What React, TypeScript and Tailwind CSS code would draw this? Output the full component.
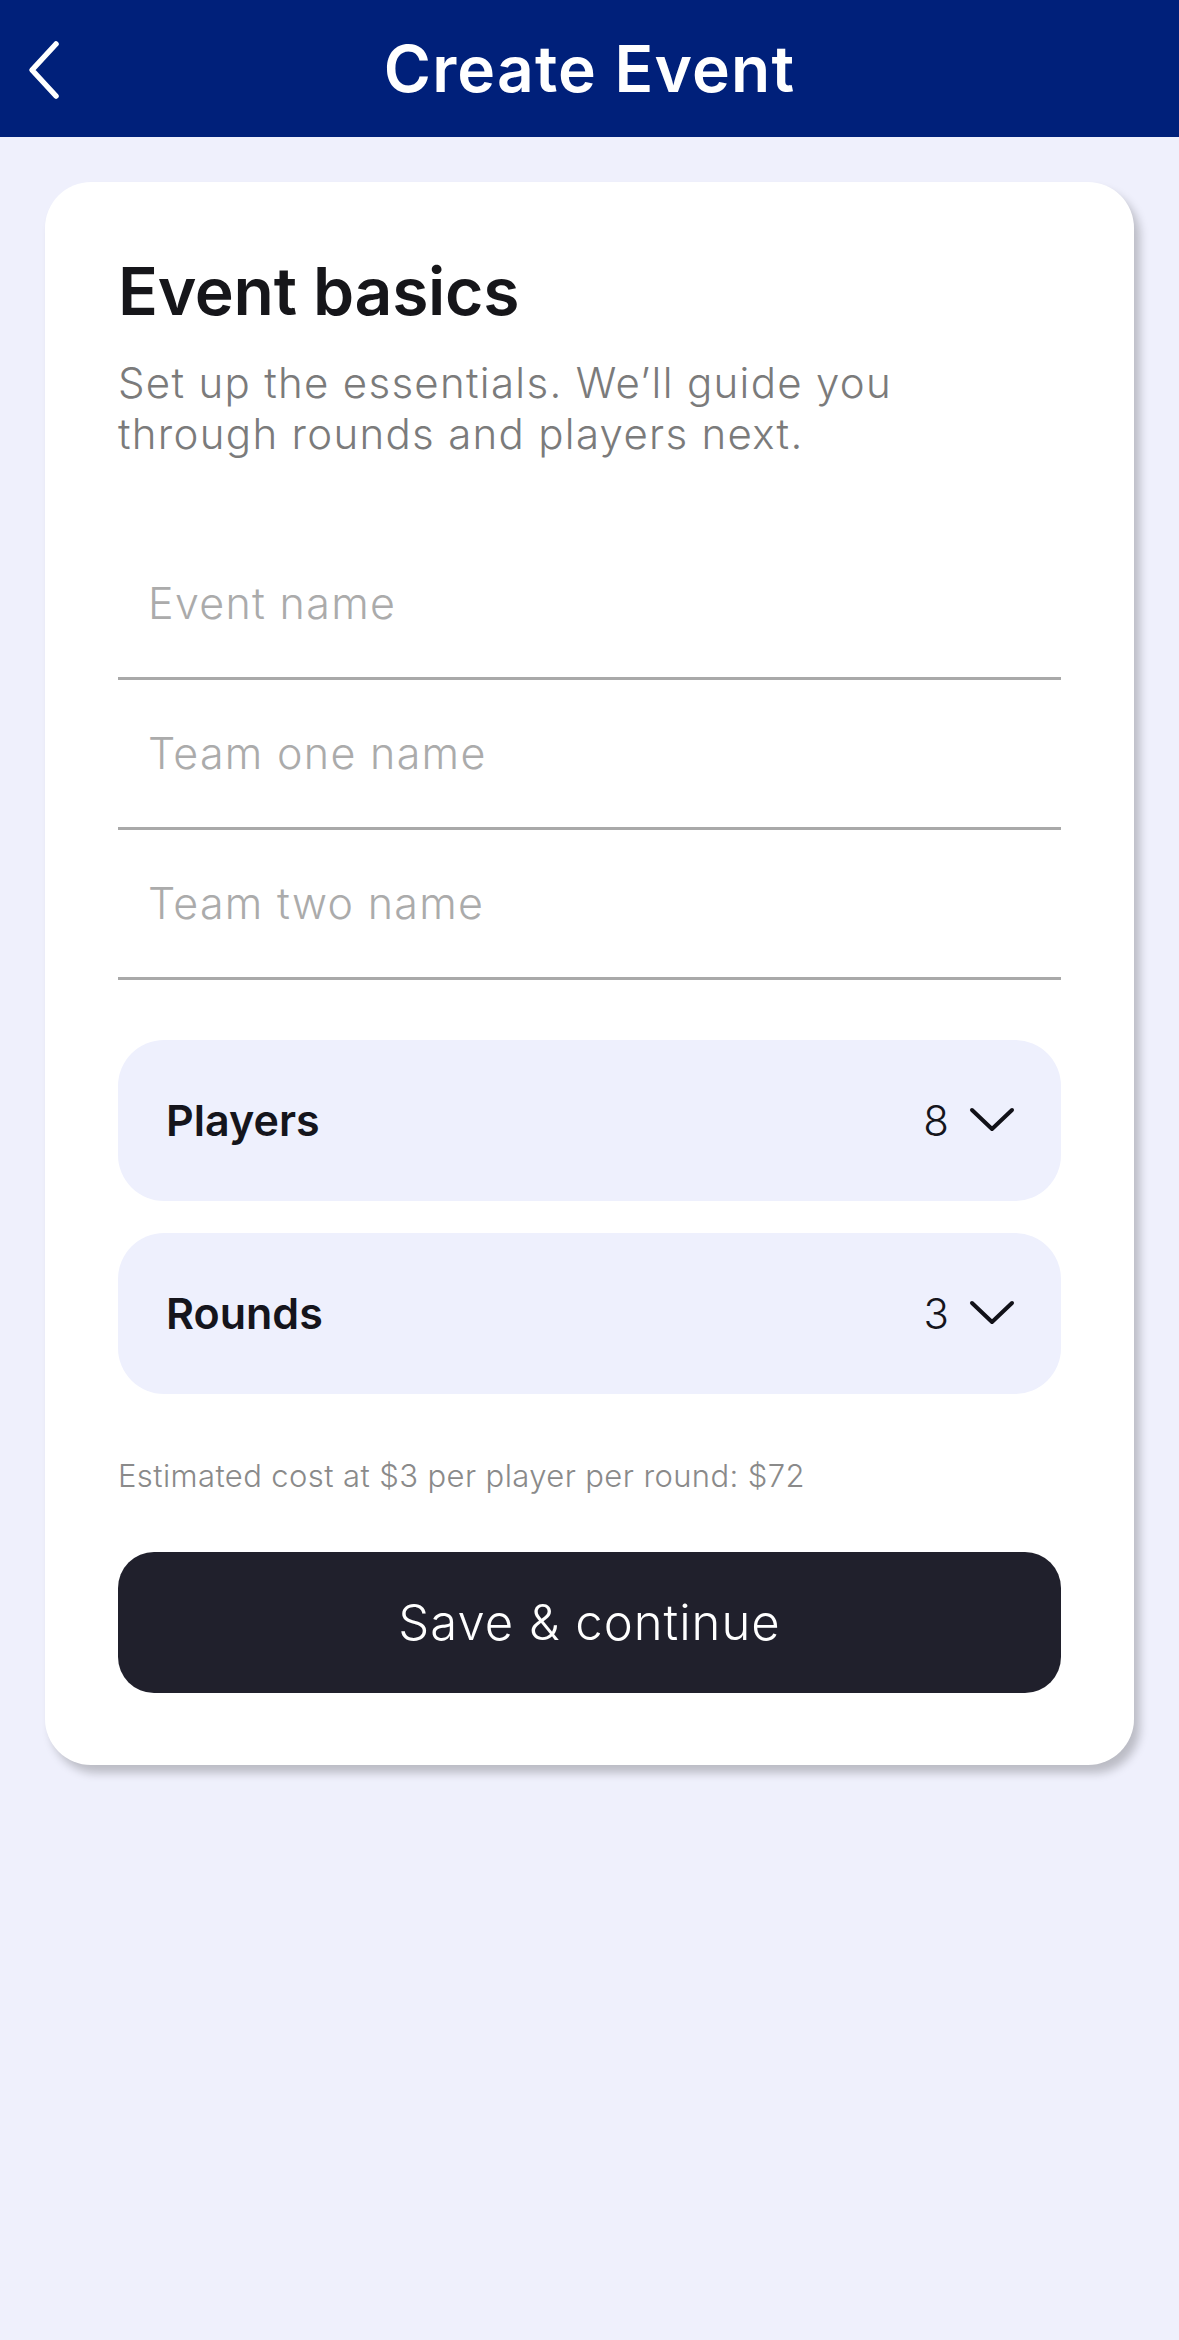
import { useState } from 'react';

const font = { fontFamily: 'Inter, "Open Sans", sans-serif' };

function ChevronDown() {
  return (
    <svg width="46" height="26" viewBox="0 0 46 26" fill="none" className="shrink-0">
      <path d="M3 3 L23 22 L43 3" stroke="#111118" strokeWidth="4" strokeLinecap="round" strokeLinejoin="round" />
    </svg>
  );
}

function Field({ placeholder }: { placeholder: string }) {
  const [value, setValue] = useState('');
  return (
    <div className="h-[150px] border-b-[3px] border-[#a9a9a9] flex items-center">
      <input
        value={value}
        onChange={(e) => setValue(e.target.value)}
        placeholder={placeholder}
        className="w-full bg-transparent outline-none pl-[30px] text-[43px] tracking-[1.3px] text-[#222] placeholder:text-[#ababab] font-light"
        style={font}
      />
    </div>
  );
}

function Picker({ label, value }: { label: string; value: string }) {
  return (
    <div className="h-[161px] rounded-[46px] bg-[#eef0fd] flex items-center justify-between pl-[48px] pr-[46px]">
      <span className="text-[43px] font-semibold text-[#15151c]">{label}</span>
      <div className="flex items-center gap-[20px]">
        <span className="text-[42px] font-light text-[#15151c]">{value}</span>
        <ChevronDown />
      </div>
    </div>
  );
}

export default function App() {
  return (
    <div className="min-h-[2340px] bg-[#eff0fc]" style={font}>
      {/* Header */}
      <header className="relative h-[137px] bg-[#00207a] flex items-center justify-center">
        <button className="absolute left-[24px] top-[40px]">
          <svg width="40" height="60" viewBox="0 0 40 60" fill="none">
            <path d="M32 4 L8 30 L32 56" stroke="white" strokeWidth="5.5" strokeLinecap="round" strokeLinejoin="round" />
          </svg>
        </button>
        <h1 className="text-[64px] font-semibold text-white tracking-[1.2px]">Create Event</h1>
      </header>

      {/* Card */}
      <div className="px-[45px] pt-[45px]">
        <div className="bg-white rounded-[46px] shadow-[6px_8px_10px_rgba(0,0,0,0.22)] px-[73px] pt-[68px] pb-[72px]">
          <h2 className="text-[66px] font-semibold text-[#16161a] leading-tight tracking-[-0.3px]">Event basics</h2>
          <p className="mt-[24px] max-w-[830px] text-[42px] leading-[51px] tracking-[1.3px] text-[#7b7b7b] font-light">
            Set up the essentials. We’ll guide you through rounds and players next.
          </p>

          <div className="mt-[71px]">
            <Field placeholder="Event name" />
            <Field placeholder="Team one name" />
            <Field placeholder="Team two name" />
          </div>

          <div className="mt-[60px] flex flex-col gap-[32px]">
            <Picker label="Players" value="8" />
            <Picker label="Rounds" value="3" />
          </div>

          <p className="mt-[59px] text-[31px] tracking-[0.4px] text-[#8a8a8a] font-light">
            Estimated cost at $3 per player per round: $72
          </p>

          <button className="mt-[53px] w-full h-[141px] rounded-[36px] bg-[#20202c] text-white text-[49px] tracking-[1px] font-light">
            Save &amp; continue
          </button>
        </div>
      </div>
    </div>
  );
}
